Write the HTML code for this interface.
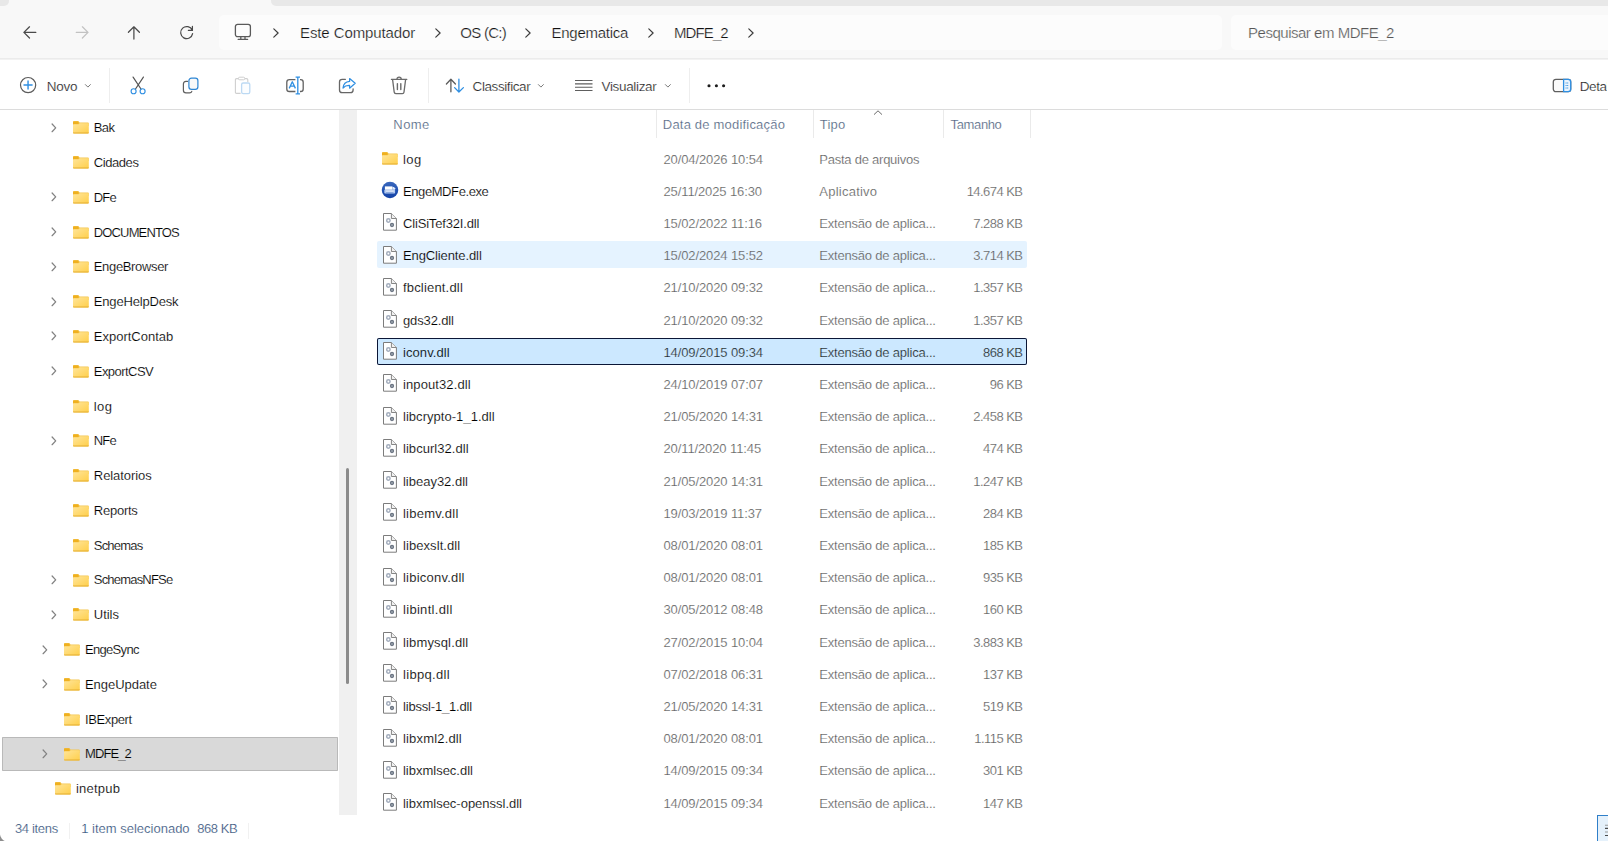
<!DOCTYPE html>
<html lang="pt-BR"><head><meta charset="utf-8"><title>MDFE_2</title>
<style>
*{box-sizing:border-box}
html,body{margin:0;padding:0}
body{width:1608px;height:841px;overflow:hidden;position:relative;background:#fff;font-family:"Liberation Sans",sans-serif;color:#1b1b1b}
svg{position:absolute;overflow:visible}
.abs{position:absolute}
/* top strip + nav */
.nav{position:absolute;left:0;top:0;width:1608px;height:60px;background:linear-gradient(#f8f8f8 0,#f8f8f8 58px,#ebebeb 58px,#ebebeb 59px,#f2f2f2 59px,#f2f2f2 60px)}
.strip-l{position:absolute;left:0;top:0;width:9px;height:6px;background:#e8e8e8;border-bottom-right-radius:5px}
.strip-r{position:absolute;left:271px;top:0;width:1337px;height:6px;background:#e8e8e8;border-bottom-left-radius:5px}
.addr{position:absolute;left:219px;top:15px;width:1003px;height:35px;background:#fcfcfc;border-radius:5px}
.srch{position:absolute;left:1231px;top:15px;width:400px;height:35px;background:#fcfcfc;border-radius:5px}
.srch span{position:absolute;left:17px;top:9.3px;font-size:15px;line-height:18px;letter-spacing:-0.48px;color:#565656;white-space:nowrap}
.bc{position:absolute;top:23.5px;font-size:15px;line-height:18px;color:#1f1f1f;white-space:nowrap}
/* toolbar */
.tb{position:absolute;left:0;top:60px;width:1608px;height:50px;background:#fff;border-bottom:1.5px solid #dcdcdc}
.tbt{position:absolute;top:78.6px;font-size:13.5px;line-height:16px;color:#1f1f1f;white-space:nowrap}
.tsep{position:absolute;top:68px;width:1px;height:35px;background:#eeeeee}
/* tree */
.tree{position:absolute;left:0;top:110px;width:339px;height:705px;overflow:hidden}
.trow{position:absolute;left:2.3px;width:336px;height:34.6px;margin-top:-0.1px}
.trow.sel{background:#d9d9d9;box-shadow:inset 0 0 0 1px #b9b9b9;border-radius:1px}
.trow svg.tchev{top:12.2px}
.trow svg.tfold{top:10.8px}
.tname{position:absolute;top:9.7px;font-size:13px;line-height:16px;color:#1b1b1b;white-space:nowrap}
.split{position:absolute;left:339.1px;top:110px;width:17.9px;height:705px;background:#f0f0f0}
.thumb{position:absolute;left:346px;top:468px;width:3px;height:216px;background:#8b8b8b;border-radius:2px}
/* list */
.hdr{position:absolute;top:116.5px;font-size:13px;line-height:16px;color:#495d7b;white-space:nowrap}
.hsep{position:absolute;top:110px;width:1px;height:28px;background:#eaeaea}
.flist{position:absolute;left:376.7px;top:0;width:650px;height:815px;overflow:hidden}
.frow{position:absolute;left:0;width:650px;height:26.5px}
.frow.hov{background:#e5f3ff;border-radius:2px}
.frow.fsel{background:#cce8ff;box-shadow:inset 0 0 0 1px #0b1636;border-radius:2px}
.frow span{position:absolute;top:6.8px;font-size:13px;line-height:16px;white-space:nowrap}
.fn{left:26.3px;color:#242424}
.fd{left:286.8px;color:#585858;letter-spacing:-0.11px}
.ft{left:442.6px;color:#585858}
.fs{right:4.3px;color:#585858;letter-spacing:-0.55px}
.fsel .fd,.fsel .ft,.fsel .fs{color:#1b1b1b}
/* status */
.status{position:absolute;left:0;top:815px;width:1608px;height:26px;background:#fff}
.status span{position:absolute;top:5.5px;font-size:13px;line-height:16px;color:#2b4a75;white-space:nowrap}
.vbtn{position:absolute;left:1597px;top:815px;width:20px;height:30px;background:#e5f1fb;border:1px solid #2f7fc9}
.ssep{position:absolute;top:8px;width:1px;height:16px;background:#f1f1f1}
.corner{position:absolute;left:0;top:834px;width:5px;height:7px;background:radial-gradient(circle at 9px -1px,rgba(140,140,140,0) 8.6px,#8e8e8e 9.6px)}
/* optical thinning of glyph stems to approximate the lighter UI face */
.fn,.tname{-webkit-text-stroke:0.15px #fff;color:#000}
.fd,.ft,.fs,.hdr,.status span{-webkit-text-stroke:0.22px #fff}
.tbt{-webkit-text-stroke:0.24px #fff;color:#111}
.bc{-webkit-text-stroke:0.24px #fcfcfc;color:#111}
.srch span{-webkit-text-stroke:0.24px #fcfcfc}
.hov span{-webkit-text-stroke-color:#e5f3ff}
.fsel span{-webkit-text-stroke-color:#cce8ff}
.sel .tname{-webkit-text-stroke-color:#d9d9d9}

</style></head>
<body>
<svg width="0" height="0" style="position:absolute">
<defs>
<linearGradient id="fg" x1="0" y1="0" x2="1" y2="1"><stop offset="0" stop-color="#ffe59a"/><stop offset="1" stop-color="#ffcf4a"/></linearGradient>
<linearGradient id="eg" x1="0" y1="0" x2="0" y2="1"><stop offset="0" stop-color="#3b69bd"/><stop offset="0.5" stop-color="#2253b2"/><stop offset="1" stop-color="#1442a6"/></linearGradient>
<g id="folder">
<path d="M0 1.1 Q0 0.2 0.9 0.2 H5.3 L6.7 1.5 H15 Q15.8 1.5 15.8 2.3 V5 H0 Z" fill="#f4c651"/>
<path d="M0 1.1 Q0 0.2 0.9 0.2 H4.9 Q5.5 0.2 5.6 0.8 V3.4 H0 Z" fill="#efb01f"/>
<path d="M0 3.9 Q0 3.3 0.7 3.3 H5 Q5.6 3.3 6 2.9 L6.4 2.6 Q6.8 2.3 7.4 2.3 H15.1 Q15.8 2.3 15.8 3 V11.7 Q15.8 12.5 15 12.5 H0.8 Q0 12.5 0 11.7 Z" fill="url(#fg)"/>
<path d="M0 11.6 V11.7 Q0 12.5 0.8 12.5 H15 Q15.8 12.5 15.8 11.7 V11.6 Z" fill="#e4ae32"/>
</g>
<g id="chev"><path d="M2.1 1 L5.7 4.85 L2.1 8.7" fill="none" stroke="#828282" stroke-width="1.25" stroke-linecap="round" stroke-linejoin="round"/></g>
<g id="dll">
<path d="M0.5 0.5 H8.4 L13.4 5.5 V17.2 H0.5 Z" fill="#fff" stroke="#7c7c7c" stroke-width="1" stroke-linejoin="round"/>
<path d="M8.4 0.5 V5.5 H13.4" fill="#f0f0f0" stroke="#868686" stroke-width="1" stroke-linejoin="round"/>
<circle cx="5.4" cy="7.5" r="1.7" fill="#fff" stroke="#a3adbd" stroke-width="1.5"/>
<circle cx="9" cy="12" r="1.45" fill="#c3c9d2" stroke="#6b7482" stroke-width="1.4"/>
</g>
<g id="exe">
<circle cx="9" cy="9" r="8.25" fill="url(#eg)"/>
<rect x="3.9" y="5.4" width="7.6" height="3.4" fill="#fff"/>
<path d="M11.5 5.9 H12.9 L14.1 7.3 V8.8 H11.5 Z" fill="#e4ecfa"/>
<rect x="3.3" y="8.7" width="10.8" height="3.7" rx="0.7" fill="#b4caef"/>
<path d="M4.8 10.1 H12.8" stroke="#eef3fc" stroke-width="0.9" fill="none"/>
<path d="M5 11.6 H12.4" stroke="#7f9fd9" stroke-width="0.8" fill="none"/>
</g>
</defs>
</svg>
<div class="nav">
<div class="strip-l"></div><div class="strip-r"></div>
<div class="addr"></div>
<div class="srch"><span>Pesquisar em MDFE_2</span></div>
<!-- nav arrows -->
<svg style="left:22px;top:25px" width="16" height="16" viewBox="0 0 16 16"><path d="M13.8 7.4 H1.9 M7.5 1.8 L1.9 7.4 L7.5 13" fill="none" stroke="#4a4a4a" stroke-width="1.25" stroke-linecap="round" stroke-linejoin="round"/></svg>
<svg style="left:74px;top:25px" width="16" height="16" viewBox="0 0 16 16"><path d="M2.3 7.4 H14 M8.4 1.8 L14 7.4 L8.4 13" fill="none" stroke="#c2c2c2" stroke-width="1.25" stroke-linecap="round" stroke-linejoin="round"/></svg>
<svg style="left:126px;top:25px" width="16" height="16" viewBox="0 0 16 16"><path d="M7.9 14 V1.8 M2.4 7.3 L7.9 1.8 L13.4 7.3" fill="none" stroke="#4a4a4a" stroke-width="1.25" stroke-linecap="round" stroke-linejoin="round"/></svg>
<svg style="left:179px;top:25px" width="16" height="16" viewBox="0 0 16 16"><path d="M13.2 5.2 A6 6 0 1 0 13.6 8.6 M13.4 1.4 V5.4 H9.4" fill="none" stroke="#4a4a4a" stroke-width="1.25" stroke-linecap="round" stroke-linejoin="round"/></svg>
<!-- monitor -->
<svg style="left:234px;top:23px" width="18" height="18" viewBox="0 0 18 18"><rect x="1.4" y="1.4" width="15" height="12.2" rx="2.2" fill="none" stroke="#5a5a5a" stroke-width="1.3"/><path d="M6.8 14 V16 M11 14 V16 M4.2 16.4 H13.6" fill="none" stroke="#5a5a5a" stroke-width="1.3" stroke-linecap="round"/></svg>
<svg style="left:272px;top:27px" width="8" height="12" viewBox="0 0 8 12"><path d="M1.8 1.9 L6.1 6 L1.8 10.1" fill="none" stroke="#3c3c3c" stroke-width="1.2" stroke-linecap="round" stroke-linejoin="round"/></svg>
<span class="bc" style="left:300px;letter-spacing:-0.1px">Este Computador</span>
<svg style="left:434px;top:27px" width="8" height="12" viewBox="0 0 8 12"><path d="M1.8 1.9 L6.1 6 L1.8 10.1" fill="none" stroke="#3c3c3c" stroke-width="1.2" stroke-linecap="round" stroke-linejoin="round"/></svg>
<span class="bc" style="left:460.3px;letter-spacing:-0.72px">OS (C:)</span>
<svg style="left:524px;top:27px" width="8" height="12" viewBox="0 0 8 12"><path d="M1.8 1.9 L6.1 6 L1.8 10.1" fill="none" stroke="#3c3c3c" stroke-width="1.2" stroke-linecap="round" stroke-linejoin="round"/></svg>
<span class="bc" style="left:551.5px;letter-spacing:-0.27px">Engematica</span>
<svg style="left:647px;top:27px" width="8" height="12" viewBox="0 0 8 12"><path d="M1.8 1.9 L6.1 6 L1.8 10.1" fill="none" stroke="#3c3c3c" stroke-width="1.2" stroke-linecap="round" stroke-linejoin="round"/></svg>
<span class="bc" style="left:674px;letter-spacing:-0.9px">MDFE_2</span>
<svg style="left:747px;top:27px" width="8" height="12" viewBox="0 0 8 12"><path d="M1.8 1.9 L6.1 6 L1.8 10.1" fill="none" stroke="#3c3c3c" stroke-width="1.2" stroke-linecap="round" stroke-linejoin="round"/></svg>
</div>
<div class="tb"></div>
<!-- Novo -->
<svg style="left:19px;top:76px" width="18" height="18" viewBox="0 0 18 18"><circle cx="9.1" cy="9.1" r="7.6" fill="none" stroke="#5c5c5c" stroke-width="1.2"/><path d="M5 9 H13.1 M9.05 5 V13" fill="none" stroke="#2f8fe2" stroke-width="1.4" stroke-linecap="round"/></svg>
<span class="tbt" style="left:46.7px;letter-spacing:-0.23px">Novo</span>
<svg style="left:84px;top:83px" width="8" height="6" viewBox="0 0 8 6"><path d="M1.4 1.6 L3.9 4.1 L6.4 1.6" fill="none" stroke="#7a7a7a" stroke-width="1" stroke-linecap="round" stroke-linejoin="round"/></svg>
<div class="tsep" style="left:109px"></div>
<!-- cut -->
<svg style="left:129px;top:76px" width="18" height="19" viewBox="0 0 18 19"><path d="M4.1 1.1 L12 13 M14.4 1.1 L6.5 13" fill="none" stroke="#555" stroke-width="1.2" stroke-linecap="round"/><circle cx="4.6" cy="15.2" r="2.5" fill="none" stroke="#2f8fe2" stroke-width="1.15"/><circle cx="13.6" cy="15.2" r="2.5" fill="none" stroke="#2f8fe2" stroke-width="1.15"/></svg>
<!-- copy -->
<svg style="left:182px;top:77px" width="18" height="18" viewBox="0 0 18 18"><path d="M5.6 4.4 H4 Q1.4 4.4 1.4 7 V13.2 Q1.4 15.8 4 15.8 H7.6 Q9.4 15.8 9.8 14.4" fill="none" stroke="#5f5f5f" stroke-width="1.2" stroke-linecap="round"/><rect x="6.9" y="1.2" width="9" height="11.2" rx="2.6" fill="#f9f9f9" stroke="#2e86d4" stroke-width="1.2"/></svg>
<!-- paste (disabled) -->
<svg style="left:234px;top:76px" width="18" height="19" viewBox="0 0 18 19"><path d="M6.6 17.4 H2.6 Q1.4 17.4 1.4 16.2 V3.8 Q1.4 2.6 2.6 2.6 H12.6 Q13.8 2.6 13.8 3.8 V6" fill="none" stroke="#cfcfcf" stroke-width="1.1"/><rect x="4.4" y="1.2" width="6.4" height="2.6" rx="1.3" fill="#fff" stroke="#cfcfcf" stroke-width="1"/><rect x="7.6" y="7" width="8.2" height="10.6" rx="1.6" fill="#fbfdff" stroke="#bcd9f3" stroke-width="1.3"/></svg>
<!-- rename -->
<svg style="left:285px;top:76px" width="20" height="19" viewBox="0 0 20 19"><path d="M10.4 3.6 H4.4 Q1.8 3.6 1.8 6.2 V12.9 Q1.8 15.5 4.4 15.5 H10.4 M15 3.6 H15.6 Q18.2 3.6 18.2 6.2 V12.9 Q18.2 15.5 15.6 15.5 H15" fill="none" stroke="#626262" stroke-width="1.3"/><path d="M12.8 1.2 V17.8 M10.6 1.2 H15 M10.6 17.8 H15" fill="none" stroke="#2f8fe2" stroke-width="1.3"/><path d="M4.2 12.4 L7.3 5.8 L10.4 12.4 M5.3 10.2 H9.3" fill="none" stroke="#2f8fe2" stroke-width="1.3" stroke-linejoin="round"/></svg>
<!-- share -->
<svg style="left:338px;top:77px" width="19" height="18" viewBox="0 0 19 18"><path d="M7.4 2.3 H4.2 Q1.5 2.3 1.5 5 V13 Q1.5 15.7 4.2 15.7 H12.4 Q15.1 15.7 15.1 13 V11.8" fill="none" stroke="#666" stroke-width="1.3" stroke-linecap="round"/><path d="M11.6 1.5 L17.2 6.3 L11.6 11.2 V8.4 Q7.4 8.2 5 11 Q5.6 5 11.6 4.4 Z" fill="#fff" stroke="#2f8fe2" stroke-width="1.2" stroke-linejoin="round"/></svg>
<!-- delete -->
<svg style="left:390px;top:76px" width="18" height="19" viewBox="0 0 18 19"><path d="M1.4 3.4 H16.8 M6.9 3.2 Q6.9 1.1 9.1 1.1 Q11.3 1.1 11.3 3.2" fill="none" stroke="#6b6b6b" stroke-width="1.2" stroke-linecap="round"/><path d="M2.6 3.6 L4.2 16.2 Q4.4 17.6 5.8 17.6 H12.4 Q13.8 17.6 14 16.2 L15.6 3.6" fill="none" stroke="#6b6b6b" stroke-width="1.3" stroke-linejoin="round"/><path d="M7.4 7.6 V13.6 M10.8 7.6 V13.6" fill="none" stroke="#6b6b6b" stroke-width="1.4" stroke-linecap="round"/></svg>
<div class="tsep" style="left:428px"></div>
<!-- sort -->
<svg style="left:445px;top:78px" width="20" height="16" viewBox="0 0 20 16"><path d="M5.9 13.8 V1.3 M1.4 6 L5.9 1.2 L10.4 6" fill="none" stroke="#5c5c5c" stroke-width="1.3" stroke-linecap="round" stroke-linejoin="round"/><path d="M13.9 1.2 V13.8 M9.6 9.6 L13.9 14 L18.4 9.6" fill="none" stroke="#2f8fe2" stroke-width="1.3" stroke-linecap="round" stroke-linejoin="round"/></svg>
<span class="tbt" style="left:472.6px;letter-spacing:-0.42px">Classificar</span>
<svg style="left:536.5px;top:83px" width="8" height="6" viewBox="0 0 8 6"><path d="M1.4 1.6 L3.9 4.1 L6.4 1.6" fill="none" stroke="#7a7a7a" stroke-width="1" stroke-linecap="round" stroke-linejoin="round"/></svg>
<!-- view -->
<svg style="left:575px;top:79px" width="18" height="13" viewBox="0 0 18 13"><path d="M0 1.5 H17.5 M0 4.85 H17.5 M0 8.2 H17.5 M0 11.5 H17.5" fill="none" stroke="#5e5e5e" stroke-width="1.05"/></svg>
<span class="tbt" style="left:601.5px;letter-spacing:-0.34px">Visualizar</span>
<svg style="left:663.5px;top:83px" width="8" height="6" viewBox="0 0 8 6"><path d="M1.4 1.6 L3.9 4.1 L6.4 1.6" fill="none" stroke="#7a7a7a" stroke-width="1" stroke-linecap="round" stroke-linejoin="round"/></svg>
<div class="tsep" style="left:689px"></div>
<svg style="left:706px;top:83px" width="20" height="6" viewBox="0 0 20 6"><circle cx="3" cy="2.8" r="1.55" fill="#1c1c1c"/><circle cx="10.4" cy="2.8" r="1.55" fill="#1c1c1c"/><circle cx="17.6" cy="2.8" r="1.55" fill="#1c1c1c"/></svg>
<!-- details -->
<svg style="left:1552px;top:78px" width="20" height="15" viewBox="0 0 20 15"><rect x="1.3" y="1.3" width="17.4" height="12.4" rx="2.6" fill="#fafafa" stroke="#5f5f5f" stroke-width="1.3"/><path d="M11.6 1.3 H16.1 Q18.7 1.3 18.7 3.9 V11.1 Q18.7 13.7 16.1 13.7 H11.6 Z" fill="#eaf4fd" stroke="#2f8fe2" stroke-width="1.3"/><path d="M13.6 5 H16.6 M13.6 7.5 H16.6 M13.6 10 H16.6" stroke="#2f8fe2" stroke-width="1" stroke-dasharray="1 0.6" fill="none"/></svg>
<span class="tbt" style="left:1579.8px;letter-spacing:-0.45px;width:27.2px;overflow:hidden">Detalhes</span>

<div class="split"></div><div class="thumb"></div>
<span class="hdr" style="left:393.3px;letter-spacing:0.45px">Nome</span>
<span class="hdr" style="left:662.8px;letter-spacing:0.2px">Data de modificação</span>
<span class="hdr" style="left:819.8px;letter-spacing:0.2px">Tipo</span>
<span class="hdr" style="left:950.6px;letter-spacing:-0.37px">Tamanho</span>
<div class="hsep" style="left:656px"></div><div class="hsep" style="left:813px"></div><div class="hsep" style="left:943px"></div><div class="hsep" style="left:1030px"></div>
<svg style="left:873.3px;top:110px" width="10" height="6" viewBox="0 0 10 6"><path d="M1 4.6 L5 0.8 L9 4.6" fill="none" stroke="#6a6a6a" stroke-width="1"/></svg>
<div class="tree">
<div class="trow" style="top:0.60px"><svg class="tchev" style="left:47.9px" width="8" height="11" viewBox="0 0 8 11"><use href="#chev"/></svg><svg class="tfold" style="left:70.7px" width="16" height="13" viewBox="0 0 16 13"><use href="#folder"/></svg><span class="tname" style="left:91.5px;letter-spacing:-0.65px">Bak</span></div>
<div class="trow" style="top:35.39px"><svg class="tfold" style="left:70.7px" width="16" height="13" viewBox="0 0 16 13"><use href="#folder"/></svg><span class="tname" style="left:91.5px;letter-spacing:-0.43px">Cidades</span></div>
<div class="trow" style="top:70.18px"><svg class="tchev" style="left:47.9px" width="8" height="11" viewBox="0 0 8 11"><use href="#chev"/></svg><svg class="tfold" style="left:70.7px" width="16" height="13" viewBox="0 0 16 13"><use href="#folder"/></svg><span class="tname" style="left:91.5px;letter-spacing:-0.86px">DFe</span></div>
<div class="trow" style="top:104.97px"><svg class="tchev" style="left:47.9px" width="8" height="11" viewBox="0 0 8 11"><use href="#chev"/></svg><svg class="tfold" style="left:70.7px" width="16" height="13" viewBox="0 0 16 13"><use href="#folder"/></svg><span class="tname" style="left:91.5px;letter-spacing:-0.86px">DOCUMENTOS</span></div>
<div class="trow" style="top:139.76px"><svg class="tchev" style="left:47.9px" width="8" height="11" viewBox="0 0 8 11"><use href="#chev"/></svg><svg class="tfold" style="left:70.7px" width="16" height="13" viewBox="0 0 16 13"><use href="#folder"/></svg><span class="tname" style="left:91.5px;letter-spacing:-0.35px">EngeBrowser</span></div>
<div class="trow" style="top:174.55px"><svg class="tchev" style="left:47.9px" width="8" height="11" viewBox="0 0 8 11"><use href="#chev"/></svg><svg class="tfold" style="left:70.7px" width="16" height="13" viewBox="0 0 16 13"><use href="#folder"/></svg><span class="tname" style="left:91.5px;letter-spacing:-0.18px">EngeHelpDesk</span></div>
<div class="trow" style="top:209.34px"><svg class="tchev" style="left:47.9px" width="8" height="11" viewBox="0 0 8 11"><use href="#chev"/></svg><svg class="tfold" style="left:70.7px" width="16" height="13" viewBox="0 0 16 13"><use href="#folder"/></svg><span class="tname" style="left:91.5px;letter-spacing:-0.01px">ExportContab</span></div>
<div class="trow" style="top:244.13px"><svg class="tchev" style="left:47.9px" width="8" height="11" viewBox="0 0 8 11"><use href="#chev"/></svg><svg class="tfold" style="left:70.7px" width="16" height="13" viewBox="0 0 16 13"><use href="#folder"/></svg><span class="tname" style="left:91.5px;letter-spacing:-0.55px">ExportCSV</span></div>
<div class="trow" style="top:278.92px"><svg class="tfold" style="left:70.7px" width="16" height="13" viewBox="0 0 16 13"><use href="#folder"/></svg><span class="tname" style="left:91.5px;letter-spacing:0.39px">log</span></div>
<div class="trow" style="top:313.71px"><svg class="tchev" style="left:47.9px" width="8" height="11" viewBox="0 0 8 11"><use href="#chev"/></svg><svg class="tfold" style="left:70.7px" width="16" height="13" viewBox="0 0 16 13"><use href="#folder"/></svg><span class="tname" style="left:91.5px;letter-spacing:-0.86px">NFe</span></div>
<div class="trow" style="top:348.50px"><svg class="tfold" style="left:70.7px" width="16" height="13" viewBox="0 0 16 13"><use href="#folder"/></svg><span class="tname" style="left:91.5px;letter-spacing:-0.06px">Relatorios</span></div>
<div class="trow" style="top:383.29px"><svg class="tfold" style="left:70.7px" width="16" height="13" viewBox="0 0 16 13"><use href="#folder"/></svg><span class="tname" style="left:91.5px;letter-spacing:-0.25px">Reports</span></div>
<div class="trow" style="top:418.08px"><svg class="tfold" style="left:70.7px" width="16" height="13" viewBox="0 0 16 13"><use href="#folder"/></svg><span class="tname" style="left:91.5px;letter-spacing:-0.8px">Schemas</span></div>
<div class="trow" style="top:452.87px"><svg class="tchev" style="left:47.9px" width="8" height="11" viewBox="0 0 8 11"><use href="#chev"/></svg><svg class="tfold" style="left:70.7px" width="16" height="13" viewBox="0 0 16 13"><use href="#folder"/></svg><span class="tname" style="left:91.5px;letter-spacing:-0.81px">SchemasNFSe</span></div>
<div class="trow" style="top:487.66px"><svg class="tchev" style="left:47.9px" width="8" height="11" viewBox="0 0 8 11"><use href="#chev"/></svg><svg class="tfold" style="left:70.7px" width="16" height="13" viewBox="0 0 16 13"><use href="#folder"/></svg><span class="tname" style="left:91.5px;letter-spacing:-0.04px">Utils</span></div>
<div class="trow" style="top:522.45px"><svg class="tchev" style="left:39.2px" width="8" height="11" viewBox="0 0 8 11"><use href="#chev"/></svg><svg class="tfold" style="left:61.3px" width="16" height="13" viewBox="0 0 16 13"><use href="#folder"/></svg><span class="tname" style="left:82.7px;letter-spacing:-0.69px">EngeSync</span></div>
<div class="trow" style="top:557.24px"><svg class="tchev" style="left:39.2px" width="8" height="11" viewBox="0 0 8 11"><use href="#chev"/></svg><svg class="tfold" style="left:61.3px" width="16" height="13" viewBox="0 0 16 13"><use href="#folder"/></svg><span class="tname" style="left:82.7px;letter-spacing:-0.04px">EngeUpdate</span></div>
<div class="trow" style="top:592.03px"><svg class="tfold" style="left:61.3px" width="16" height="13" viewBox="0 0 16 13"><use href="#folder"/></svg><span class="tname" style="left:82.7px;letter-spacing:-0.39px">IBExpert</span></div>
<div class="trow sel" style="top:626.82px"><svg class="tchev" style="left:39.2px" width="8" height="11" viewBox="0 0 8 11"><use href="#chev"/></svg><svg class="tfold" style="left:61.3px" width="16" height="13" viewBox="0 0 16 13"><use href="#folder"/></svg><span class="tname" style="left:82.7px;letter-spacing:-0.89px">MDFE_2</span></div>
<div class="trow" style="top:661.61px"><svg class="tfold" style="left:53.1px" width="16" height="13" viewBox="0 0 16 13"><use href="#folder"/></svg><span class="tname" style="left:73.6px;letter-spacing:0.25px">inetpub</span></div>
</div>
<div class="flist">
<div class="frow" style="top:144.85px"><svg class="fico" style="left:4.9px;top:6.85px" width="16" height="13" viewBox="0 0 16 13"><use href="#folder"/></svg><span class="fn" style="letter-spacing:0.5px">log</span><span class="fd">20/04/2026 10:54</span><span class="ft" style="letter-spacing:-0.24px">Pasta de arquivos</span><span class="fs"></span></div>
<div class="frow" style="top:177.05px"><svg class="fico" style="left:4.3px;top:3.85px" width="18" height="18" viewBox="0 0 18 18"><use href="#exe"/></svg><span class="fn" style="letter-spacing:-0.41px">EngeMDFe.exe</span><span class="fd">25/11/2025 16:30</span><span class="ft" style="letter-spacing:0.24px">Aplicativo</span><span class="fs">14.674 KB</span></div>
<div class="frow" style="top:209.25px"><svg class="fico" style="left:6.3px;top:4.15px" width="15" height="19" viewBox="0 0 15 19"><use href="#dll"/></svg><span class="fn" style="letter-spacing:-0.17px">CliSiTef32I.dll</span><span class="fd">15/02/2022 11:16</span><span class="ft" style="letter-spacing:-0.2px">Extensão de aplica...</span><span class="fs">7.288 KB</span></div>
<div class="frow hov" style="top:241.45px"><svg class="fico" style="left:6.3px;top:4.15px" width="15" height="19" viewBox="0 0 15 19"><use href="#dll"/></svg><span class="fn" style="letter-spacing:-0.11px">EngCliente.dll</span><span class="fd">15/02/2024 15:52</span><span class="ft" style="letter-spacing:-0.2px">Extensão de aplica...</span><span class="fs">3.714 KB</span></div>
<div class="frow" style="top:273.65px"><svg class="fico" style="left:6.3px;top:4.15px" width="15" height="19" viewBox="0 0 15 19"><use href="#dll"/></svg><span class="fn" style="letter-spacing:0.18px">fbclient.dll</span><span class="fd">21/10/2020 09:32</span><span class="ft" style="letter-spacing:-0.2px">Extensão de aplica...</span><span class="fs">1.357 KB</span></div>
<div class="frow" style="top:305.85px"><svg class="fico" style="left:6.3px;top:4.15px" width="15" height="19" viewBox="0 0 15 19"><use href="#dll"/></svg><span class="fn" style="letter-spacing:-0.13px">gds32.dll</span><span class="fd">21/10/2020 09:32</span><span class="ft" style="letter-spacing:-0.2px">Extensão de aplica...</span><span class="fs">1.357 KB</span></div>
<div class="frow fsel" style="top:338.05px"><svg class="fico" style="left:6.3px;top:4.15px" width="15" height="19" viewBox="0 0 15 19"><use href="#dll"/></svg><span class="fn" style="letter-spacing:0.09px">iconv.dll</span><span class="fd">14/09/2015 09:34</span><span class="ft" style="letter-spacing:-0.2px">Extensão de aplica...</span><span class="fs">868 KB</span></div>
<div class="frow" style="top:370.25px"><svg class="fico" style="left:6.3px;top:4.15px" width="15" height="19" viewBox="0 0 15 19"><use href="#dll"/></svg><span class="fn" style="letter-spacing:0.1px">inpout32.dll</span><span class="fd">24/10/2019 07:07</span><span class="ft" style="letter-spacing:-0.2px">Extensão de aplica...</span><span class="fs">96 KB</span></div>
<div class="frow" style="top:402.45px"><svg class="fico" style="left:6.3px;top:4.15px" width="15" height="19" viewBox="0 0 15 19"><use href="#dll"/></svg><span class="fn" style="letter-spacing:0.04px">libcrypto-1_1.dll</span><span class="fd">21/05/2020 14:31</span><span class="ft" style="letter-spacing:-0.2px">Extensão de aplica...</span><span class="fs">2.458 KB</span></div>
<div class="frow" style="top:434.65px"><svg class="fico" style="left:6.3px;top:4.15px" width="15" height="19" viewBox="0 0 15 19"><use href="#dll"/></svg><span class="fn" style="letter-spacing:0.05px">libcurl32.dll</span><span class="fd">20/11/2020 11:45</span><span class="ft" style="letter-spacing:-0.2px">Extensão de aplica...</span><span class="fs">474 KB</span></div>
<div class="frow" style="top:466.85px"><svg class="fico" style="left:6.3px;top:4.15px" width="15" height="19" viewBox="0 0 15 19"><use href="#dll"/></svg><span class="fn" style="letter-spacing:-0.01px">libeay32.dll</span><span class="fd">21/05/2020 14:31</span><span class="ft" style="letter-spacing:-0.2px">Extensão de aplica...</span><span class="fs">1.247 KB</span></div>
<div class="frow" style="top:499.05px"><svg class="fico" style="left:6.3px;top:4.15px" width="15" height="19" viewBox="0 0 15 19"><use href="#dll"/></svg><span class="fn" style="letter-spacing:0.23px">libemv.dll</span><span class="fd">19/03/2019 11:37</span><span class="ft" style="letter-spacing:-0.2px">Extensão de aplica...</span><span class="fs">284 KB</span></div>
<div class="frow" style="top:531.25px"><svg class="fico" style="left:6.3px;top:4.15px" width="15" height="19" viewBox="0 0 15 19"><use href="#dll"/></svg><span class="fn" style="letter-spacing:0.08px">libexslt.dll</span><span class="fd">08/01/2020 08:01</span><span class="ft" style="letter-spacing:-0.2px">Extensão de aplica...</span><span class="fs">185 KB</span></div>
<div class="frow" style="top:563.45px"><svg class="fico" style="left:6.3px;top:4.15px" width="15" height="19" viewBox="0 0 15 19"><use href="#dll"/></svg><span class="fn" style="letter-spacing:0.22px">libiconv.dll</span><span class="fd">08/01/2020 08:01</span><span class="ft" style="letter-spacing:-0.2px">Extensão de aplica...</span><span class="fs">935 KB</span></div>
<div class="frow" style="top:595.65px"><svg class="fico" style="left:6.3px;top:4.15px" width="15" height="19" viewBox="0 0 15 19"><use href="#dll"/></svg><span class="fn" style="letter-spacing:0.31px">libintl.dll</span><span class="fd">30/05/2012 08:48</span><span class="ft" style="letter-spacing:-0.2px">Extensão de aplica...</span><span class="fs">160 KB</span></div>
<div class="frow" style="top:627.85px"><svg class="fico" style="left:6.3px;top:4.15px" width="15" height="19" viewBox="0 0 15 19"><use href="#dll"/></svg><span class="fn" style="letter-spacing:0.15px">libmysql.dll</span><span class="fd">27/02/2015 10:04</span><span class="ft" style="letter-spacing:-0.2px">Extensão de aplica...</span><span class="fs">3.883 KB</span></div>
<div class="frow" style="top:660.05px"><svg class="fico" style="left:6.3px;top:4.15px" width="15" height="19" viewBox="0 0 15 19"><use href="#dll"/></svg><span class="fn" style="letter-spacing:0.33px">libpq.dll</span><span class="fd">07/02/2018 06:31</span><span class="ft" style="letter-spacing:-0.2px">Extensão de aplica...</span><span class="fs">137 KB</span></div>
<div class="frow" style="top:692.25px"><svg class="fico" style="left:6.3px;top:4.15px" width="15" height="19" viewBox="0 0 15 19"><use href="#dll"/></svg><span class="fn" style="letter-spacing:-0.18px">libssl-1_1.dll</span><span class="fd">21/05/2020 14:31</span><span class="ft" style="letter-spacing:-0.2px">Extensão de aplica...</span><span class="fs">519 KB</span></div>
<div class="frow" style="top:724.45px"><svg class="fico" style="left:6.3px;top:4.15px" width="15" height="19" viewBox="0 0 15 19"><use href="#dll"/></svg><span class="fn" style="letter-spacing:0.17px">libxml2.dll</span><span class="fd">08/01/2020 08:01</span><span class="ft" style="letter-spacing:-0.2px">Extensão de aplica...</span><span class="fs">1.115 KB</span></div>
<div class="frow" style="top:756.65px"><svg class="fico" style="left:6.3px;top:4.15px" width="15" height="19" viewBox="0 0 15 19"><use href="#dll"/></svg><span class="fn" style="letter-spacing:-0.01px">libxmlsec.dll</span><span class="fd">14/09/2015 09:34</span><span class="ft" style="letter-spacing:-0.2px">Extensão de aplica...</span><span class="fs">301 KB</span></div>
<div class="frow" style="top:788.85px"><svg class="fico" style="left:6.3px;top:4.15px" width="15" height="19" viewBox="0 0 15 19"><use href="#dll"/></svg><span class="fn" style="letter-spacing:-0.01px">libxmlsec-openssl.dll</span><span class="fd">14/09/2015 09:34</span><span class="ft" style="letter-spacing:-0.2px">Extensão de aplica...</span><span class="fs">147 KB</span></div>
</div>
<div class="status"><span style="left:14.9px;letter-spacing:-0.32px">34 itens</span><span style="left:81.2px">1 item selecionado</span><span style="left:197.2px;letter-spacing:-0.43px">868 KB</span>
<div class="ssep" style="left:69px"></div><div class="ssep" style="left:248px"></div></div>
<div class="vbtn"><svg style="left:6.5px;top:8px" width="6" height="13" viewBox="0 0 6 13"><path d="M0 1.2 H6 M0 8 H6" stroke="#9a9a9a" stroke-width="1.1"/><path d="M0 4.4 H6 M0 11.5 H6" stroke="#4a4a4a" stroke-width="1.1"/></svg></div>
<div class="corner"></div>
</body></html>
